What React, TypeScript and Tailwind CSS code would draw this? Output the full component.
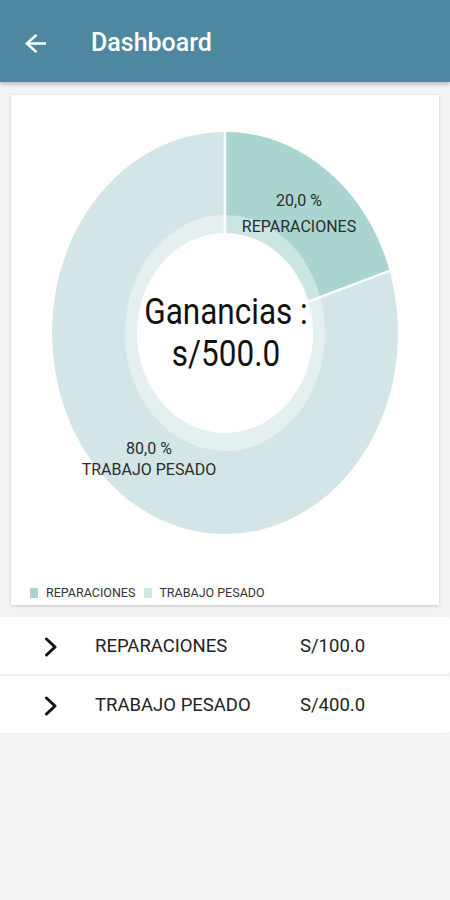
type Entry = { label: string; amount: string };

const entries: Entry[] = [
  { label: "REPARACIONES", amount: "S/100.0" },
  { label: "TRABAJO PESADO", amount: "S/400.0" },
];

// Donut stretched like the screenshot (rx 173, ry 201).
function Donut() {
  const rx = 173;
  const ry = 201;
  const cx = rx;
  const cy = ry;
  const a = (72 * Math.PI) / 180;
  const ex = cx + rx * Math.sin(a);
  const ey = cy - ry * Math.cos(a);
  const label = (x: number, y: number, t: string, size: number, sy: number, fill = "#2b2b2b") => (
    <g transform={`translate(${x} ${y}) scale(1 ${sy})`}>
      <text x={0} y={0} textAnchor="middle" fontSize={size} fill={fill} fontFamily="Roboto, 'Liberation Sans', sans-serif">
        {t}
      </text>
    </g>
  );
  return (
    <svg width={rx * 2} height={ry * 2} viewBox={`0 0 ${rx * 2} ${ry * 2}`}>
      <ellipse cx={cx} cy={cy} rx={rx} ry={ry} fill="#d3e6e7" />
      <path d={`M${cx} ${cy} L${cx} 0 A${rx} ${ry} 0 0 1 ${ex} ${ey} Z`} fill="#a9d4cf" />
      <line x1={cx} y1={cy} x2={cx} y2={0} stroke="#fff" strokeWidth={2.5} />
      <line x1={cx} y1={cy} x2={ex} y2={ey} stroke="#fff" strokeWidth={2.5} />
      <ellipse cx={cx} cy={cy} rx={100} ry={118} fill="#fff" fillOpacity={0.4} />
      <ellipse cx={cx} cy={cy} rx={88} ry={100} fill="#fff" />
      {label(247, 74, "20,0 %", 16, 1.05)}
      {label(247, 100, "REPARACIONES", 16, 1.05)}
      {label(97, 322, "80,0 %", 16, 1.05)}
      {label(97, 343, "TRABAJO PESADO", 16, 1.05)}
      {label(174, 192, "Ganancias :", 31.5, 1.18, "#111")}
      {label(174, 234, "s/500.0", 31.5, 1.18, "#111")}
    </svg>
  );
}

function BackArrow() {
  return (
    <svg width={21} height={19} viewBox="4 4 16 16" preserveAspectRatio="none" className="shrink-0">
      <path d="M20 11H7.83l5.59-5.59L12 4l-8 8 8 8 1.41-1.41L7.83 13H20v-2z" fill="#fff" />
    </svg>
  );
}

function Chevron() {
  return (
    <svg width={14} height={20} viewBox="0 0 14 20" className="shrink-0">
      <polyline points="2.5,2 11,10 2.5,18" fill="none" stroke="#111" strokeWidth={3} strokeLinecap="round" strokeLinejoin="round" />
    </svg>
  );
}

export default function App() {
  return (
    <div className="min-h-[900px] bg-[#f4f4f4] font-['Roboto','Liberation_Sans',sans-serif]">
      <header className="flex h-[82px] items-center bg-[#4d88a0] pl-[25px] pt-[4px] shadow-[0_2px_4px_rgba(0,0,0,0.25)]">
        <BackArrow />
        <h1 className="ml-[45px] text-[25px] font-medium text-white">Dashboard</h1>
      </header>

      <section className="mx-[11px] mt-[13px] h-[510px] bg-white px-[19px] pt-[37px] shadow-[0_1px_3px_rgba(0,0,0,0.2)]">
        <div className="flex justify-center">
          <Donut />
        </div>
        <div className="mt-[50px] flex items-center text-[12.5px] text-[#333]">
          <span className="h-[10px] w-[8px] bg-[#a9d4cf]" />
          <span className="ml-[8px]">REPARACIONES</span>
          <span className="ml-[9px] h-[10px] w-[8px] bg-[#d3e6e7]" />
          <span className="ml-[7px]">TRABAJO PESADO</span>
        </div>
      </section>

      <ul className="mt-[12px] flex flex-col gap-[2px]">
        {entries.map((e) => (
          <li key={e.label} className="flex h-[57px] items-center rounded-r-[4px] bg-white pl-[44px] pt-[3px] text-[18.5px] text-[#222] shadow-[0_1px_1px_rgba(0,0,0,0.03)]">
            <Chevron />
            <span className="ml-[37px] w-[205px]">{e.label}</span>
            <span>{e.amount}</span>
          </li>
        ))}
      </ul>
    </div>
  );
}
